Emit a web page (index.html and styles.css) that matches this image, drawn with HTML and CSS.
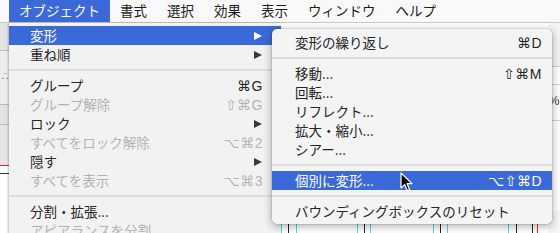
FILE: index.html
```html
<!DOCTYPE html>
<html lang="ja">
<head>
<meta charset="utf-8">
<link rel="stylesheet" href="styles.css">
</head>
<body>
<div class="screen">
  <div class="menubar">
    <span class="mb-item active">オブジェクト</span>
    <span class="mb-item">書式</span>
    <span class="mb-item">選択</span>
    <span class="mb-item">効果</span>
    <span class="mb-item">表示</span>
    <span class="mb-item">ウィンドウ</span>
    <span class="mb-item">ヘルプ</span>
  </div>

  <div class="stage">
    <div class="lpanel">
      <div class="lrow r1"></div>
      <div class="lrow r2"><span class="dots">∴</span></div>
      <div class="lrow r3"></div>
      <div class="lrow r4"></div>
      <div class="lrow r5"></div>
    </div>
    <div class="rpanel">
      <div class="rrow a"></div>
      <div class="rrow b"></div>
      <div class="rrow c">%</div>
      <div class="rrow d"></div>
    </div>
    <i class="guide cyan" style="left:281px"></i>
    <i class="guide black" style="left:288px"></i>
    <i class="guide cyan" style="left:296px"></i>
    <i class="guide cyan" style="left:357px"></i>
    <i class="guide black" style="left:364px"></i>
    <i class="guide cyan" style="left:370px"></i>
    <i class="guide cyan" style="left:433px"></i>
    <i class="guide black" style="left:440px"></i>
    <i class="guide cyan" style="left:447px"></i>
    <i class="guide cyan" style="left:508px"></i>
    <i class="guide black" style="left:516px"></i>
    <i class="guide black" style="left:532px"></i>
    <i class="guide red" style="left:537px"></i>
  </div>

  <div class="menu main">
    <div class="row hl"><span class="label">変形</span><span class="arrow"></span></div>
    <div class="row"><span class="label">重ね順</span><span class="arrow"></span></div>
    <div class="sep"></div>
    <div class="row"><span class="label">グループ</span><span class="key">⌘G</span></div>
    <div class="row dis"><span class="label">グループ解除</span><span class="key">⇧⌘G</span></div>
    <div class="row"><span class="label">ロック</span><span class="arrow"></span></div>
    <div class="row dis"><span class="label">すべてをロック解除</span><span class="key">⌥⌘2</span></div>
    <div class="row"><span class="label">隠す</span><span class="arrow"></span></div>
    <div class="row dis"><span class="label">すべてを表示</span><span class="key">⌥⌘3</span></div>
    <div class="sep"></div>
    <div class="row"><span class="label">分割・拡張...</span></div>
    <div class="row dis"><span class="label">アピアランスを分割</span></div>
  </div>

  <div class="menu sub">
    <div class="row"><span class="label">変形の繰り返し</span><span class="key">⌘D</span></div>
    <div class="sep"></div>
    <div class="row"><span class="label">移動...</span><span class="key">⇧⌘M</span></div>
    <div class="row"><span class="label">回転...</span></div>
    <div class="row"><span class="label">リフレクト...</span></div>
    <div class="row"><span class="label">拡大・縮小...</span></div>
    <div class="row"><span class="label">シアー...</span></div>
    <div class="sep"></div>
    <div class="row hl"><span class="label">個別に変形...</span><span class="key">⌥⇧⌘D</span></div>
    <div class="sep"></div>
    <div class="row"><span class="label">バウンディングボックスのリセット</span></div>
  </div>

  <svg class="cursor" width="14" height="20" viewBox="0 0 14 20">
    <path d="M1 1 L1 16 L4.6 12.6 L7.2 18.6 L9.6 17.6 L7 11.6 L12 11.6 Z" fill="#000" stroke="#fff" stroke-width="1.2" stroke-linejoin="round"/>
  </svg>
</div>
</body>
</html>
```

FILE: styles.css
```css
* { box-sizing: border-box; }
html, body { margin: 0; padding: 0; }
body {
  width: 560px;
  height: 233px;
  overflow: hidden;
  font-family: "Noto Sans CJK JP", "Noto Sans", sans-serif;
  background: #ffffff;
}
.screen {
  position: relative;
  width: 560px;
  height: 233px;
  overflow: hidden;
}

/* menubar */
.menubar {
  display: flex;
  height: 23px;
  padding-left: 9px;
  background: #f9f9f9;
  border-bottom: 1px solid #c9c9c9;
}
.mb-item {
  display: flex;
  align-items: center;
  height: 22px;
  padding: 0 10px;
  font-size: 13.5px;
  color: #1c1c1c;
  line-height: 1;
}
.mb-item.active {
  background: #3b6ad8;
  color: #fff;
}

/* background canvas */
.stage {
  position: relative;
  height: 210px;
  background: #ffffff;
}
.lpanel {
  position: absolute;
  left: 0;
  top: 0;
  width: 12px;
  height: 210px;
  display: flex;
  flex-direction: column;
  background: #ffffff;
}
.lrow { border-bottom: 1px solid #b9b9b9; background: #dedede; }
.lrow.r1 { height: 28px; background: #e3e3e3; }
.lrow.r2 { height: 54px; background: #ececec; position: relative; }
.lrow.r3 { height: 20px; background: #e2e2e2; }
.lrow.r4 { height: 41px; background: #e6e6e6; border-bottom: 1px solid #d92b2b; }
.lrow.r5 { height: 8px; background: #fafafa; border-bottom: 1px solid #333; }
.dots {
  position: absolute;
  left: 1px;
  top: 19px;
  font-size: 8px;
  color: #3b5bd8;
}
.rpanel {
  position: absolute;
  right: 0;
  top: 0;
  width: 12px;
  height: 210px;
  display: flex;
  flex-direction: column;
  background: #f6f6f6;
}
.rrow { border-bottom: 1px solid #cfcfcf; }
.rrow.a { height: 44px; background: #f4f4f4; }
.rrow.b { height: 18px; background: #ffffff; }
.rrow.c { height: 36px; background: #ffffff; font-family: "Liberation Sans", sans-serif; font-size: 13px; color: #444; padding-top: 8px; }
.rrow.d { height: 90px; background: #ffffff; border-bottom: none; }
.guide {
  position: absolute;
  top: 190px;
  width: 1px;
  height: 30px;
}
.guide.cyan { background: #5fd3d6; }
.guide.black { background: #222; }
.guide.red { background: #e0302c; }

/* menus */
.menu {
  position: absolute;
  background: #f2f2f2;
  font-size: 13.5px;
  color: #262626;
}
.menu.main {
  left: 9px;
  top: 23px;
  width: 272px;
  height: 230px;
  padding-top: 3px;
  box-shadow: -1px 0 2px rgba(0, 0, 0, 0.25);
}
.menu.sub {
  left: 272px;
  top: 29px;
  width: 280px;
  height: 195px;
  padding-top: 4px;
  border-radius: 5px;
  background: #f4f4f4;
  box-shadow: 0 2px 8px rgba(0, 0, 0, 0.35), 0 0 0 0.5px rgba(0, 0, 0, 0.15);
}
.row {
  display: flex;
  align-items: center;
  height: 19px;
  line-height: 1;
}
.main .row { padding: 0 18px 0 21px; }
.sub .row { padding: 0 10px 0 23px; }
.label { flex: 1; white-space: nowrap; }
.key {
  font-family: "Liberation Sans", "DejaVu Sans", sans-serif;
  font-size: 14px;
  letter-spacing: 0.5px;
}
.row.hl { background: #3b6ad8; color: #fff; }
.row.dis { color: #b3b3b3; }
.arrow {
  width: 0;
  height: 0;
  border-left: 8px solid #3a3a3a;
  border-top: 4.5px solid transparent;
  border-bottom: 4.5px solid transparent;
  margin-right: 1px;
}
.row.hl .arrow { border-left-color: #fff; }
.sep {
  height: 12px;
  display: flex;
  align-items: center;
}
.sep::before {
  content: "";
  display: block;
  width: 100%;
  height: 2px;
  background: #dddddd;
}

.cursor {
  position: absolute;
  left: 400px;
  top: 172px;
}
```
